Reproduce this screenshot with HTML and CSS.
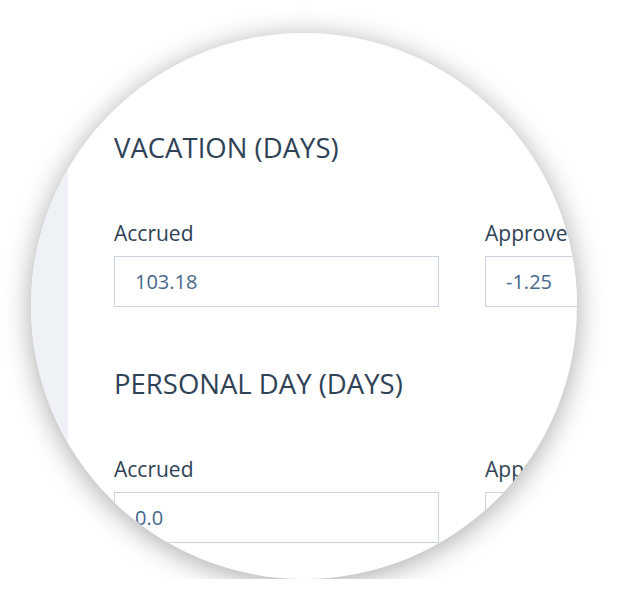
FILE: index.html
```html
<!DOCTYPE html>
<html lang="en">
<head>
  <meta charset="UTF-8" />
  <meta name="viewport" content="width=device-width, initial-scale=1.0"/>
  <title>Time Off Balances</title>
  <link rel="stylesheet" href="styles.css">
</head>
<body>
  <div class="lens">
    <div class="sidebar"></div>
    <div class="content">
      <section class="balance">
        <h2>VACATION (DAYS)</h2>
        <div class="fields">
          <div class="field">
            <label>Accrued</label>
            <input type="text" value="103.18">
          </div>
          <div class="field">
            <label>Approved</label>
            <input type="text" value="-1.25">
          </div>
        </div>
      </section>

      <section class="balance">
        <h2>PERSONAL DAY (DAYS)</h2>
        <div class="fields">
          <div class="field">
            <label>Accrued</label>
            <input type="text" value="0.0">
          </div>
          <div class="field">
            <label>Approved</label>
            <input type="text" value="0.0">
          </div>
        </div>
      </section>
    </div>
  </div>
</body>
</html>
```

FILE: styles.css
```css
body {
  margin: 0;
  padding: 33px 0 0 31px;
  background-color: #fff;
  font-family: "Open Sans", "Noto Sans", sans-serif;
  color: #2f4256;
}

.lens {
  width: 546px;
  height: 546px;
  border-radius: 50%;
  overflow: hidden;
  display: flex;
  background-color: #fff;
  box-shadow: 0 4px 28px rgba(0, 0, 0, 0.34);
}

.sidebar {
  width: 37px;
  flex-shrink: 0;
  background-color: #eef2f6;
}

.content {
  flex: 1;
  padding: 96px 0 0 46px;
}

.balance h2 {
  margin: 0 0 53px;
  font-size: 27.5px;
  font-weight: 400;
  line-height: 37px;
  color: #2f4256;
}

.balance + .balance {
  margin-top: 58px;
}

.fields {
  display: grid;
  grid-template-columns: 325px 325px;
  gap: 46px;
}

.field label {
  display: block;
  font-size: 21px;
  line-height: 29px;
  margin-bottom: 8px;
}

.field input {
  box-sizing: border-box;
  width: 100%;
  height: 51px;
  margin: 0;
  padding: 0 0 0 20px;
  border: 1px solid #c9d3e2;
  border-radius: 0;
  font-family: inherit;
  font-size: 20px;
  color: #47678a;
  background-color: #fff;
  outline: none;
}
```
